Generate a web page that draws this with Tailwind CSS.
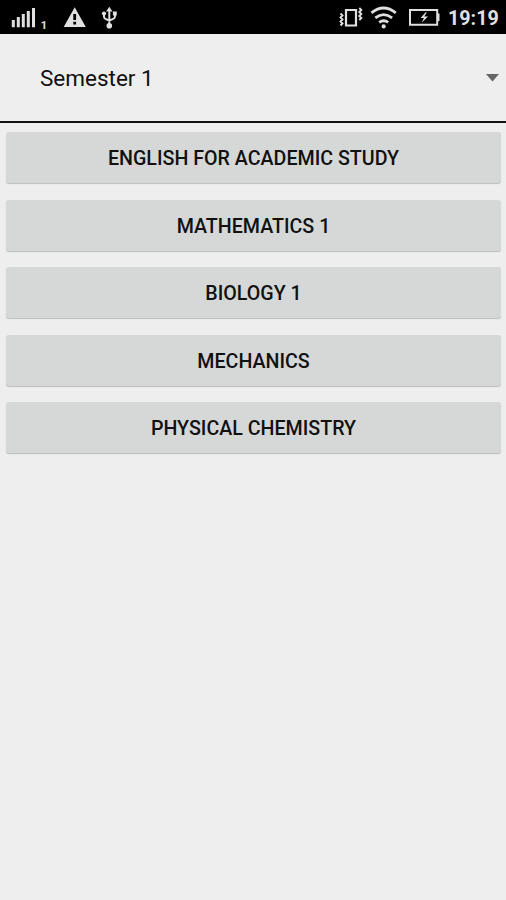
<!DOCTYPE html>
<html lang="en">
<head>
    <meta charset="UTF-8">
    <meta name="viewport" content="width=device-width, initial-scale=1.0">
    <title>Semester 1</title>
    <script src="https://cdn.jsdelivr.net/npm/@tailwindcss/browser@4"></script>
</head>
<body class="min-h-screen bg-[#eeeeee] font-['Roboto',sans-serif] text-[#111111]">
    <!-- Status bar -->
    <header class="h-[34px] bg-black flex items-center justify-between text-[#e0e0e0]">
        <svg class="w-[130px] h-[34px]" viewBox="0 0 130 34" fill="currentColor">
            <!-- Signal -->
            <path d="M11.8 20h3v7.3h-3zM16.8 17h3v10.3h-3zM21.8 14h3v13.3h-3zM26.8 11h3v16.3h-3zM32 8h3v19.3h-3z"></path>
            <text x="40.8" y="29.2" font-size="11" font-weight="700">1</text>
            <!-- Warning -->
            <path fill-rule="evenodd" d="M74.7 7.3L85.8 27H63.7zM73.3 14v6h2.8v-6zM73.3 21.8v2.6h2.8v-2.6z"></path>
            <!-- USB -->
            <path fill="none" stroke="currentColor" stroke-width="2" d="M109.3 10v15M104 13.5v3.3q0 1.5 1.5 2.1l3.8 1.7 3.8-1.7q1.8-.7 1.8-2.1v-3.3"></path>
            <circle cx="109.3" cy="25.7" r="2.8"></circle>
            <circle cx="104" cy="13.5" r="2.1"></circle>
            <path d="M109.3 6.8l3.2 4.7h-6.4zM112.9 11.5h3.9v3.9h-3.9z"></path>
        </svg>
        <div class="flex items-center">
            <svg class="w-[110px] h-[34px]" viewBox="336 0 110 34" fill="none" stroke="currentColor">
                <!-- Vibrate -->
                <path stroke-width="2.2" d="M346 10h10v15.5h-10z"></path>
                <path stroke-width="1.9" d="M340.5 13.5l2 2-2 2 2 2-2 2 2 2-2 2M359.3 8l2 2-2 2 2 2-2 2 2 2-2 2"></path>
                <!-- Wifi -->
                <path stroke-width="2.8" d="M371.5 12.8q12-9.6 24.3 0M375.3 17.8q8.3-6.4 16.8 0M379.2 22.4q4.5-3.2 9 0"></path>
                <circle cx="383.7" cy="26.4" r="2.1" fill="currentColor" stroke="none"></circle>
                <!-- Battery -->
                <path stroke-width="2" d="M410 9.9h27.2v14.8H410z"></path>
                <path fill="currentColor" stroke="none" d="M437.5 13.5h2v7.5h-2zM425.6 12.2l-5 5.9h3.3l-2.2 4.6 6.3-6.3h-3.7l2.5-4.2z"></path>
            </svg>
            <span class="w-[60px] pl-0.5 pt-[3px] text-[19.7px] leading-none font-bold">19:19</span>
        </div>
    </header>

    <!-- Semester spinner -->
    <div class="h-[89px] pl-10 pr-[7px] flex items-center justify-between border-b-2 border-[#111111]">
        <span class="text-[22.5px] pt-[3px]">Semester 1</span>
        <svg class="w-[13px] h-[8px]" viewBox="0 0 13 8" fill="#666666">
            <path d="M0 0h13L6.5 7.5z"></path>
        </svg>
    </div>

    <!-- Course list -->
    <main class="pt-[9px] pl-1.5 pr-[5px] flex flex-col gap-[16.5px] text-[19.65px] font-medium">
        <button class="h-[51px] pt-[3px] rounded-[3px] bg-[#d6d8d7] shadow-[0_1px_1px_#bbbdbc]">ENGLISH FOR ACADEMIC STUDY</button>
        <button class="h-[51px] pt-[3px] rounded-[3px] bg-[#d6d8d7] shadow-[0_1px_1px_#bbbdbc]">MATHEMATICS 1</button>
        <button class="h-[51px] pt-[3px] rounded-[3px] bg-[#d6d8d7] shadow-[0_1px_1px_#bbbdbc]">BIOLOGY 1</button>
        <button class="h-[51px] pt-[3px] rounded-[3px] bg-[#d6d8d7] shadow-[0_1px_1px_#bbbdbc]">MECHANICS</button>
        <button class="h-[51px] pt-[3px] rounded-[3px] bg-[#d6d8d7] shadow-[0_1px_1px_#bbbdbc]">PHYSICAL CHEMISTRY</button>
    </main>
</body>
</html>
